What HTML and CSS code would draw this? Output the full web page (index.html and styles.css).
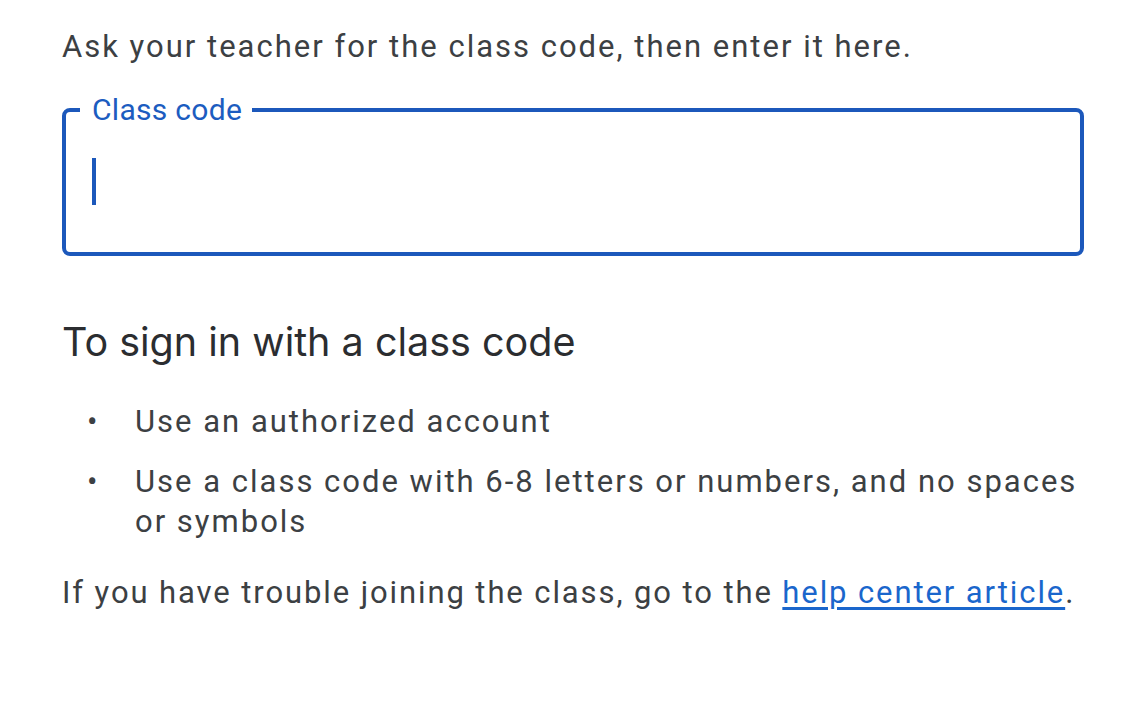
FILE: index.html
```html
<!DOCTYPE html>
<html lang="en">
<head>
<meta charset="utf-8">
<title>Join class</title>
<link rel="stylesheet" href="styles.css">
</head>
<body>
<main class="page">
  <p class="intro">Ask your teacher for the class code, then enter it here.</p>
  <fieldset class="field">
    <legend class="field-label">Class code</legend>
    <div class="field-body"><span class="caret"></span></div>
  </fieldset>
  <h2 class="heading">To sign in with a class code</h2>
  <ul class="tips">
    <li class="tip">Use an authorized account</li>
    <li class="tip">Use a class code with 6-8 letters or numbers, and no spaces or symbols</li>
  </ul>
  <p class="help">If you have trouble joining the class, go to the <a class="link" href="#">help center article</a>.</p>
</main>
</body>
</html>
```
FILE: styles.css
```css
html, body {
  margin: 0;
  background: #ffffff;
}
body {
  font-family: Roboto, "Liberation Sans", sans-serif;
  color: #3c4043;
}
.page {
  width: 1022px;
  padding: 27px 0 0 62px;
}
.intro {
  margin: 0;
  font-size: 31px;
  line-height: 40px;
  letter-spacing: 2px;
}
.field {
  margin: 29px 0 0;
  padding: 0 0 0 14px;
  border: 4px solid #1c58bb;
  border-radius: 8px;
  height: 160px;
  box-sizing: border-box;
}
.field-label {
  padding: 0 10px 0 12px;
  font-size: 30px;
  line-height: 28px;
  letter-spacing: 0.3px;
  color: #1c5cc0;
}
.field-body {
  padding: 34px 0 0 12px;
}
.caret {
  display: block;
  width: 4px;
  height: 47px;
  background: #1c58bb;
}
.heading {
  margin: 62px 0 0;
  font-family: Inter, "Open Sans", Roboto, sans-serif;
  font-weight: 400;
  font-size: 39.5px;
  line-height: 48px;
  color: #2b2d30;
}
.tips {
  list-style: none;
  margin: 36px 0 0;
  padding: 0;
}
.tip {
  display: flex;
  font-size: 31px;
  line-height: 40px;
  letter-spacing: 2px;
}
.tip + .tip {
  margin-top: 20px;
}
.tip::before {
  content: "\2022";
  flex: 0 0 73px;
  box-sizing: border-box;
  padding-left: 25px;
}
.help {
  margin: 31px 0 0;
  font-size: 31px;
  line-height: 40px;
  letter-spacing: 1.9px;
}
.link {
  color: #1a66cc;
  text-decoration: underline;
  text-underline-offset: 4px;
}
```
